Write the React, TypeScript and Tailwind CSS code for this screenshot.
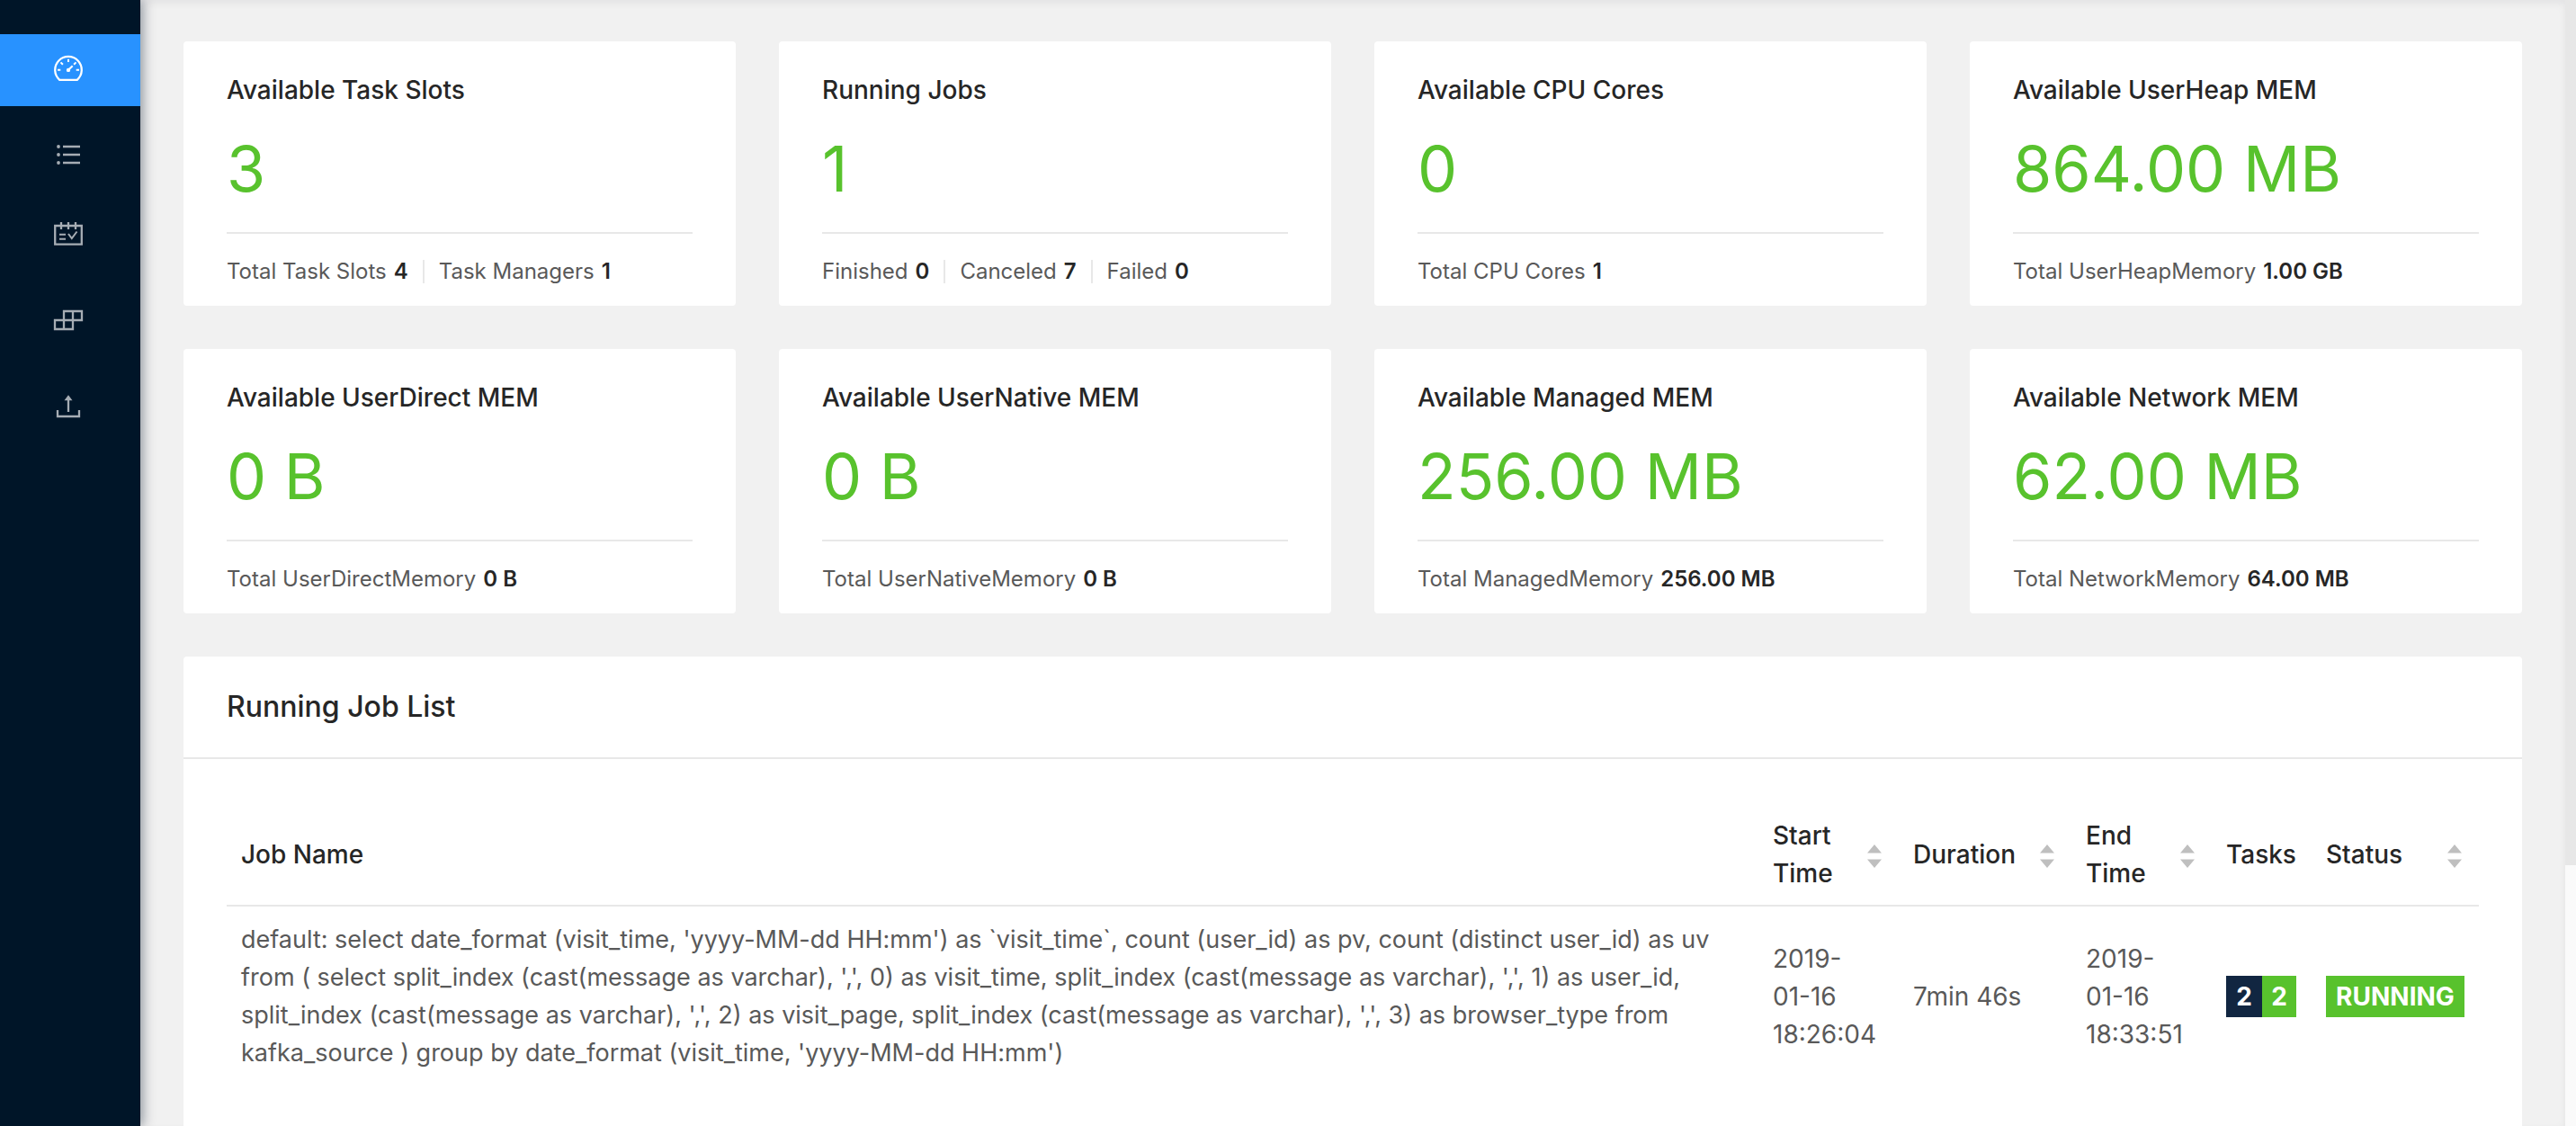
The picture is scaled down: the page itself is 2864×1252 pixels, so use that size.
import React from "react";

type Metric = { label: string; value: string };
type StatCard = { title: string; value: string; totals: Metric[] };

const cards: StatCard[] = [
  {
    title: "Available Task Slots",
    value: "3",
    totals: [
      { label: "Total Task Slots", value: "4" },
      { label: "Task Managers", value: "1" },
    ],
  },
  {
    title: "Running Jobs",
    value: "1",
    totals: [
      { label: "Finished", value: "0" },
      { label: "Canceled", value: "7" },
      { label: "Failed", value: "0" },
    ],
  },
  { title: "Available CPU Cores", value: "0", totals: [{ label: "Total CPU Cores", value: "1" }] },
  { title: "Available UserHeap MEM", value: "864.00 MB", totals: [{ label: "Total UserHeapMemory", value: "1.00 GB" }] },
  { title: "Available UserDirect MEM", value: "0 B", totals: [{ label: "Total UserDirectMemory", value: "0 B" }] },
  { title: "Available UserNative MEM", value: "0 B", totals: [{ label: "Total UserNativeMemory", value: "0 B" }] },
  { title: "Available Managed MEM", value: "256.00 MB", totals: [{ label: "Total ManagedMemory", value: "256.00 MB" }] },
  { title: "Available Network MEM", value: "62.00 MB", totals: [{ label: "Total NetworkMemory", value: "64.00 MB" }] },
];

const jobName =
  "default: select date_format (visit_time, 'yyyy-MM-dd HH:mm') as `visit_time`, count (user_id) as pv, count (distinct user_id) as uv from ( select split_index (cast(message as varchar), ',', 0) as visit_time, split_index (cast(message as varchar), ',', 1) as user_id, split_index (cast(message as varchar), ',', 2) as visit_page, split_index (cast(message as varchar), ',', 3) as browser_type from kafka_source ) group by date_format (visit_time, 'yyyy-MM-dd HH:mm')";

function Icon({ viewBox = "0 0 32 32", children }: { viewBox?: string; children: React.ReactNode }) {
  return (
    <svg viewBox={viewBox} className="size-8 overflow-visible" fill="none" stroke="currentColor" strokeWidth="2.3" aria-hidden="true">
      {children}
    </svg>
  );
}

function DashboardIcon() {
  return (
    <Icon>
      <path d="M6.2 26.800A14.800 14.800 0 1 1 25.800 26.800Z" strokeLinejoin="round" />
      <path d="M16 3.700v3.300M4 15.700h3.300M24.700 15.700H28M7.500 7.400l2.400 2.400M24.500 7.400l-2.400 2.400" strokeWidth="2" />
      <path d="M16 15.700l4.700-4.500" strokeWidth="2.200" />
      <circle cx="16" cy="15.900" r="2.200" fill="currentColor" stroke="none" />
    </Icon>
  );
}

function ListIcon() {
  return (
    <Icon>
      <path d="M10 7h19M10 16h19M10 25h19" />
      <g fill="currentColor" stroke="none">
        <circle cx="5" cy="7" r="1.900" />
        <circle cx="5" cy="16" r="1.900" />
        <circle cx="5" cy="25" r="1.900" />
      </g>
    </Icon>
  );
}

function ScheduleIcon() {
  return (
    <Icon viewBox="0 6 32 32">
      <path d="M1.200 7h29.600v20.700H1.200Z" />
      <path d="M8 3v8M16 3v8M24 3v8" />
      <path d="M6 16.800h7M6 21.800h7M16 16l3.800 5 5.700-7.500" strokeWidth="2" />
    </Icon>
  );
}

function BlocksIcon() {
  return (
    <Icon viewBox="0 4 32 32">
      <path d="M11 6h20v10H11ZM1 16h20v10H1ZM21 6v10M11 16v10" />
    </Icon>
  );
}

function UploadIcon() {
  return (
    <Icon viewBox="0 2 32 32">
      <path d="M4 20v7h24v-7M16 22V7" />
      <path d="M11.500 9.300L16 3.300l4.500 6Z" fill="currentColor" stroke="none" />
    </Icon>
  );
}

const navItems = [
  { label: "Overview", icon: <DashboardIcon />, active: true },
  { label: "Running Jobs", icon: <ListIcon />, active: false },
  { label: "Completed Jobs", icon: <ScheduleIcon />, active: false },
  { label: "Task Managers", icon: <BlocksIcon />, active: false },
  { label: "Submit New Job", icon: <UploadIcon />, active: false },
];

function Sidebar() {
  return (
    <aside className="z-10 w-[156px] shrink-0 bg-[#001528] pt-[38px] shadow-[4px_0_12px_rgba(0,21,41,0.35)]">
      <nav className="flex flex-col gap-3.5">
        {navItems.map((item) => (
          <a
            key={item.label}
            href="#"
            aria-label={item.label}
            className={
              item.active
                ? "flex h-20 items-center justify-center bg-[#2892ff] pr-1 text-white"
                : "flex h-20 items-center justify-center pr-1 text-[#a6adb4]"
            }
          >
            {item.icon}
          </a>
        ))}
      </nav>
    </aside>
  );
}

function Card({ card }: { card: StatCard }) {
  return (
    <article className="rounded-sm bg-white px-12 pt-8 pb-5">
      <h3 className="text-[28px] leading-[44px] font-medium">{card.title}</h3>
      <p className="pt-4 pb-5 text-[70px] leading-[100px] text-[#58c22d]">{card.value}</p>
      <dl className="flex items-center border-t-2 border-[#e8e8e8] pt-6 text-[24px] leading-9">
        {card.totals.map((t, i) => (
          <div key={t.label} className="flex items-center">
            {i > 0 && <span className="mx-4 h-[26px] w-0.5 bg-[#e8e8e8]" />}
            <dt className="mr-2 text-[#595959]">{t.label}</dt>
            <dd className="font-semibold">{t.value}</dd>
          </div>
        ))}
      </dl>
    </article>
  );
}

function HeaderCell({ label, sortable = false }: { label: string; sortable?: boolean }) {
  return (
    <th scope="col" className="border-b-2 border-[#e8e8e8] px-4 pt-4 pb-3.5 font-medium">
      <div className="flex items-center justify-between">
        <span>{label}</span>
        {sortable && (
          <button type="button" aria-label={`Sort by ${label}`} className="flex w-[22px] shrink-0 justify-center pt-1">
            <svg viewBox="0 0 16 26" className="h-[26px] w-4" fill="#bfbfbf" aria-hidden="true">
              <path d="M8 0l8 9.500H0ZM8 26l8-9.500H0Z" />
            </svg>
          </button>
        )}
      </div>
    </th>
  );
}

function Timestamp({ year, day, time }: { year: string; day: string; time: string }) {
  return (
    <time>
      {year}-<br />
      {day}
      <br />
      {time}
    </time>
  );
}

function JobTable() {
  return (
    <table className="w-full table-fixed border-separate border-spacing-0 text-left text-[28px] leading-[42px]">
      <colgroup>
        <col />
        <col className="w-[156px]" />
        <col className="w-[192px]" />
        <col className="w-[156px]" />
        <col className="w-[111px]" />
        <col className="w-[186px]" />
      </colgroup>
      <thead>
        <tr>
          <HeaderCell label="Job Name" />
          <HeaderCell label="Start Time" sortable />
          <HeaderCell label="Duration" sortable />
          <HeaderCell label="End Time" sortable />
          <HeaderCell label="Tasks" />
          <HeaderCell label="Status" sortable />
        </tr>
      </thead>
      <tbody>
        <tr className="text-[#595959]">
          <td className="px-4 py-4 text-[27px]">{jobName}</td>
          <td className="px-4 py-4">
            <Timestamp year="2019" day="01-16" time="18:26:04" />
          </td>
          <td className="px-4 py-4 whitespace-nowrap">7min 46s</td>
          <td className="px-4 py-4">
            <Timestamp year="2019" day="01-16" time="18:33:51" />
          </td>
          <td className="px-4 py-4">
            <div className="flex leading-[46px] font-bold text-white">
              <span className="w-10 bg-[#112641] text-center">2</span>
              <span className="w-[38px] bg-[#58c22d] text-center">2</span>
            </div>
          </td>
          <td className="px-4 py-4">
            <div className="bg-[#58c22d] text-center leading-[46px] font-bold text-white">RUNNING</div>
          </td>
        </tr>
      </tbody>
    </table>
  );
}

export default function App() {
  return (
    <div className="flex h-screen overflow-hidden bg-[#f1f1f1] font-['Inter',sans-serif] text-[#262626]">
      <Sidebar />
      <main className="min-w-0 flex-1 overflow-hidden px-12 pt-[46px] shadow-[inset_0_4px_8px_rgba(0,21,41,0.06)]">
        <section className="grid grid-cols-4 gap-12">
          {cards.map((card) => (
            <Card key={card.title} card={card} />
          ))}
        </section>
        <section className="mt-12 min-h-screen rounded-sm bg-white">
          <h2 className="border-b-2 border-[#e8e8e8] px-12 py-8 text-[32px] leading-[48px] font-medium">Running Job List</h2>
          <div className="p-12">
            <JobTable />
          </div>
        </section>
      </main>
      <div className="w-3 shrink-0 bg-[#fafafa]">
        <div className="h-[962px] bg-[#e7e7e7]" />
      </div>
    </div>
  );
}
